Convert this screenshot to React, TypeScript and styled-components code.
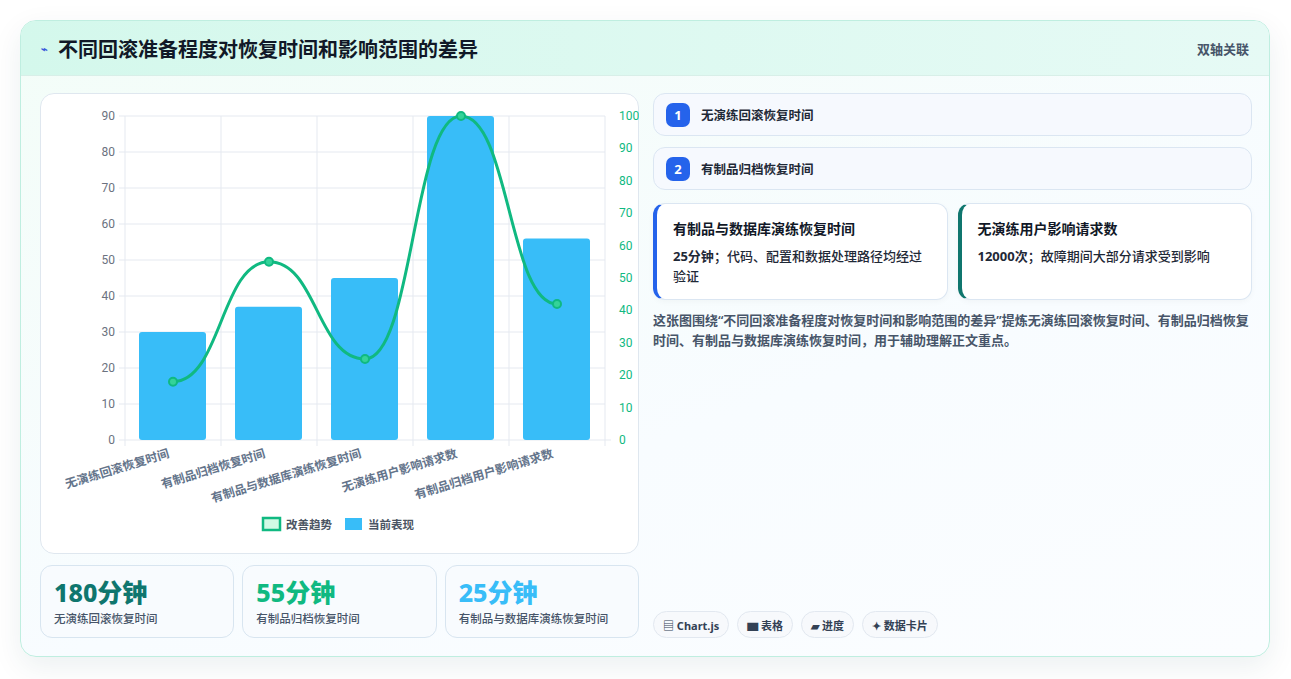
import React from "react";
import styled, { createGlobalStyle } from "styled-components";

const G = createGlobalStyle`
  body{margin:0;background:#fff;font-family:"Noto Sans","Noto Sans CJK SC",sans-serif;}
`;
const Page = styled.div`padding:20px 20px 22px 20px;`;
const Card = styled.div`
  width:1250px;height:637px;box-sizing:border-box;border:1px solid #bfeee0;border-radius:16px;overflow:hidden;
  background:linear-gradient(160deg,#f3fdf8 0%,#f8fcff 60%,#fbfdff 100%);
  box-shadow:0 10px 30px rgba(15,60,80,.08);display:flex;flex-direction:column;`;
const Header = styled.div`
  height:55px;flex:none;box-sizing:border-box;display:flex;align-items:center;justify-content:space-between;
  padding:0 20px;background:linear-gradient(90deg,#d4f8ec,#e6faf5);border-bottom:1px solid #d8efe8;`;
const Title = styled.h1`margin:0;font-size:20px;font-weight:700;color:#111827;display:flex;align-items:center;gap:10px;`;
const Bolt = styled.span`color:#3b5bdb;font-size:11px;`;
const Side = styled.span`font-size:13px;color:#475569;font-weight:600;`;
const Body = styled.div`flex:1;display:grid;grid-template-columns:599px 599px;gap:14px;padding:17px 18px 18px 19px;`;
const Left = styled.div`display:flex;flex-direction:column;gap:11px;`;
const ChartBox = styled.div`height:461px;box-sizing:border-box;border:1px solid #dfe7ef;border-radius:14px;background:#fff;position:relative;`;
const Stats = styled.div`display:grid;grid-template-columns:repeat(3,1fr);gap:8px;`;
const Stat = styled.div`height:73px;box-sizing:border-box;border:1px solid #d8e5f0;border-radius:12px;background:#f8fbfe;padding:10px 13px;`;
const Big = styled.div<{c:string}>`font-size:25px;font-weight:800;color:${p=>p.c};line-height:32px;`;
const Small = styled.div`font-size:11.5px;color:#475569;margin-top:2px;font-weight:500;`;
const Right = styled.div`display:flex;flex-direction:column;`;
const Row = styled.div`height:43px;box-sizing:border-box;border:1px solid #dbe6f2;border-radius:12px;background:#f6f9fe;display:flex;align-items:center;gap:11px;padding:0 12px;margin-bottom:11px;font-size:12.5px;font-weight:600;color:#1f2937;`;
const Num = styled.span`width:24px;height:24px;border-radius:7px;background:#2563eb;color:#fff;font-size:13px;font-weight:700;display:flex;align-items:center;justify-content:center;`;
const Cards = styled.div`display:grid;grid-template-columns:1fr 1fr;gap:10px;margin-top:2px;`;
const Info = styled.div<{c:string}>`height:97px;box-sizing:border-box;border:1px solid #dbe6f2;border-left:4px solid ${p=>p.c};border-radius:12px;background:#fff;padding:14px 16px;box-shadow:0 2px 6px rgba(0,0,0,.03);`;
const InfoT = styled.div`font-size:14px;font-weight:700;color:#111827;margin-bottom:6px;line-height:22px;`;
const InfoD = styled.div`font-size:13px;color:#1f2937;line-height:20px;font-weight:500;b{font-weight:700;}`;
const Para = styled.p`margin:10px 0 0;font-size:13px;line-height:20px;color:#475569;font-weight:600;`;
const Tags = styled.div`margin-top:auto;display:flex;gap:8px;`;
const Tag = styled.span`height:27px;box-sizing:border-box;padding:0 9px;border:1px solid #e2e8f0;border-radius:14px;background:#f7f9fc;display:flex;align-items:center;gap:4px;font-size:11px;font-weight:700;color:#334155;`;

const X0=84,X1=564,Y0=22,Y1=346;
const bars=[30,37,45,90,56];
const line=[18,55,25,100,42];
const labels=["无演练回滚恢复时间","有制品归档恢复时间","有制品与数据库演练恢复时间","无演练用户影响请求数","有制品归档用户影响请求数"];
function Chart(){
  const cw=(X1-X0)/5;
  const pts=line.map((v,i)=>[X0+cw*(i+.5),Y1-(Y1-Y0)*v/100]);
  let d=`M${pts[0][0]},${pts[0][1]}`;
  for(let i=1;i<pts.length;i++){const [a,b]=pts[i-1],[c,e]=pts[i];const m=(c-a)/2;d+=` C${a+m},${b} ${c-m},${e} ${c},${e}`;}
  return <svg width="598" height="461" style={{display:"block"}} fontFamily="Roboto,'Noto Sans CJK SC',sans-serif">
    {Array.from({length:10},(_,i)=>{const y=Y1-(Y1-Y0)*i/9;return <g key={i}>
      <line x1={X0-6} x2={X1} y1={y} y2={y} stroke="#e5e9f0"/>
      <text x={X0-10} y={y+4} textAnchor="end" fontSize="12" fill="#6b7280">{i*10}</text></g>})}
    {Array.from({length:11},(_,i)=>{const y=Y1-(Y1-Y0)*i/10;return <text key={i} x={X1+14} y={y+4} fontSize="12" fill="#10b981">{i*10}</text>})}
    {Array.from({length:6},(_,i)=><line key={i} x1={X0+cw*i} x2={X0+cw*i} y1={Y0} y2={Y1+6} stroke="#e5e9f0"/>)}
    <line x1={X1} x2={X1+6} y1={Y1} y2={Y1} stroke="#e5e9f0"/>
    {bars.map((v,i)=>{const h=(Y1-Y0)*v/90;return <rect key={i} x={X0+cw*i+14} y={Y1-h} width={67} height={h} rx="3" fill="#38bdf8"/>})}
    <path d={d} fill="none" stroke="#10b981" strokeWidth="3"/>
    {pts.map(([x,y],i)=><circle key={i} cx={x} cy={y} r="4" fill="#34d399" stroke="#10b981" strokeWidth="2"/>)}
    {labels.map((l,i)=>{const x=X0+cw*(i+.5)-3,y=Y1+17;return <text key={i} x={x} y={y} fontSize="12" fontWeight="600" fill="#64748b" textAnchor="end" transform={`rotate(-17 ${x} ${y})`} fontFamily="'Noto Sans CJK SC',sans-serif">{l}</text>})}
    <rect x="222" y="424" width="17" height="12" fill="#d1fae5" stroke="#10b981" strokeWidth="2.5"/>
    <text x="245" y="435" fontSize="11.5" fill="#4b5563" fontWeight="600" fontFamily="'Noto Sans CJK SC',sans-serif">改善趋势</text>
    <rect x="304" y="424" width="17" height="12" fill="#38bdf8"/>
    <text x="327" y="435" fontSize="11.5" fill="#4b5563" fontWeight="600" fontFamily="'Noto Sans CJK SC',sans-serif">当前表现</text>
  </svg>;
}

export default function App(){
  return <Page><G/><Card>
    <Header><Title><Bolt>⌁</Bolt>不同回滚准备程度对恢复时间和影响范围的差异</Title><Side>双轴关联</Side></Header>
    <Body>
      <Left>
        <ChartBox><Chart/></ChartBox>
        <Stats>
          <Stat><Big c="#0f766e">180分钟</Big><Small>无演练回滚恢复时间</Small></Stat>
          <Stat><Big c="#10b981">55分钟</Big><Small>有制品归档恢复时间</Small></Stat>
          <Stat><Big c="#38bdf8">25分钟</Big><Small>有制品与数据库演练恢复时间</Small></Stat>
        </Stats>
      </Left>
      <Right>
        <Row><Num>1</Num>无演练回滚恢复时间</Row>
        <Row><Num>2</Num>有制品归档恢复时间</Row>
        <Cards>
          <Info c="#2563eb"><InfoT>有制品与数据库演练恢复时间</InfoT><InfoD><b>25分钟</b>；代码、配置和数据处理路径均经过验证</InfoD></Info>
          <Info c="#0f766e"><InfoT>无演练用户影响请求数</InfoT><InfoD><b>12000次</b>；故障期间大部分请求受到影响</InfoD></Info>
        </Cards>
        <Para>这张图围绕“不同回滚准备程度对恢复时间和影响范围的差异”提炼无演练回滚恢复时间、有制品归档恢复时间、有制品与数据库演练恢复时间，用于辅助理解正文重点。</Para>
        <Tags><Tag>▤ Chart.js</Tag><Tag>▆ 表格</Tag><Tag>▰ 进度</Tag><Tag>✦ 数据卡片</Tag></Tags>
      </Right>
    </Body>
  </Card></Page>;
}
